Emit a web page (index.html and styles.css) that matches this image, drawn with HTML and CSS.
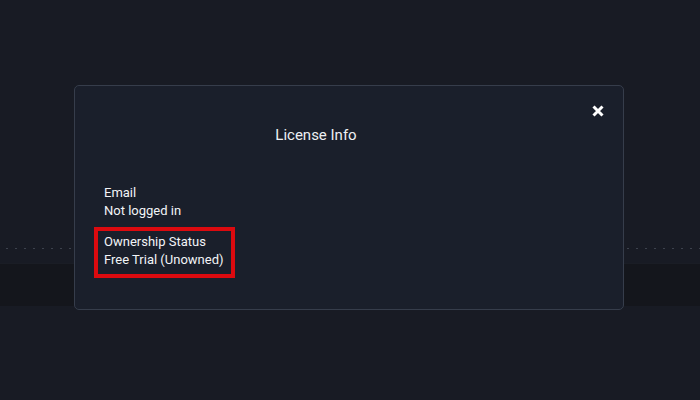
FILE: index.html
```
<!doctype html>
<html lang="en">
  <head>
    <meta charset="UTF-8" />
    <meta name="viewport" content="width=device-width, initial-scale=1.0" />
    <title>License Info</title>
    <link rel="stylesheet" href="styles.css">
  </head>
  <body>
    <div class="page">
      <div class="dots"></div>
      <div class="band"></div>
    </div>
    <div class="overlay">
      <div class="modal">
        <div class="modal-header">
          <h2 class="modal-title">License Info</h2>
          <button class="close-btn" aria-label="Close">
            <svg width="12" height="12" viewBox="0 0 12 12">
              <path d="M1.5 1.5 L10.5 10.5 M10.5 1.5 L1.5 10.5" stroke="#fff" stroke-width="3" fill="none" />
            </svg>
          </button>
        </div>
        <div class="modal-body">
          <div class="field">
            <div>Email</div>
            <div>Not logged in</div>
          </div>
          <div class="field highlight">
            <div>Ownership Status</div>
            <div>Free Trial (Unowned)</div>
          </div>
        </div>
      </div>
    </div>
  </body>
</html>
```

FILE: styles.css
```
body {
  margin: 0;
  background-color: #181b24;
  font-family: Roboto, "Liberation Sans", sans-serif;
  color: #f2f4f7;
  width: 700px;
  height: 400px;
  overflow: hidden;
}

.page {
  padding-top: 248px;
}

.dots {
  height: 1px;
  margin-left: 6px;
  background-image: repeating-linear-gradient(
    to right,
    #3d424d 0 2px,
    transparent 2px 9px
  );
}

.band {
  margin-top: 14px;
  height: 42px;
  background-color: #14161c;
  border-top: 1px solid #1a1d25;
}

/* modal over the page */
.overlay {
  position: absolute;
  top: 85px;
  left: 74px;
}

.modal {
  box-sizing: border-box;
  width: 550px;
  height: 225px;
  background-color: #1a1f2b;
  border: 1px solid #363d4b;
  border-radius: 5px;
}

.modal-header {
  display: grid;
  grid-template-columns: 482px 1fr;
}

.modal-title {
  margin: 39px 0 0;
  text-align: center;
  font-size: 15px;
  font-weight: 400;
  line-height: 20px;
  color: #eef0f3;
}

.close-btn {
  justify-self: end;
  margin: 19px 19px 0 0;
  padding: 0;
  width: 12px;
  height: 12px;
  border: none;
  background: none;
  cursor: pointer;
}

.close-btn svg {
  display: block;
}

.modal-body {
  padding: 39px 0 0 29px;
  font-size: 13px;
  line-height: 18px;
}

.field.highlight {
  width: fit-content;
  margin: 7px 0 0 -10px;
  padding: 2px 7px 5px 6px;
  border: 4px solid #dc0a0f;
}
```
